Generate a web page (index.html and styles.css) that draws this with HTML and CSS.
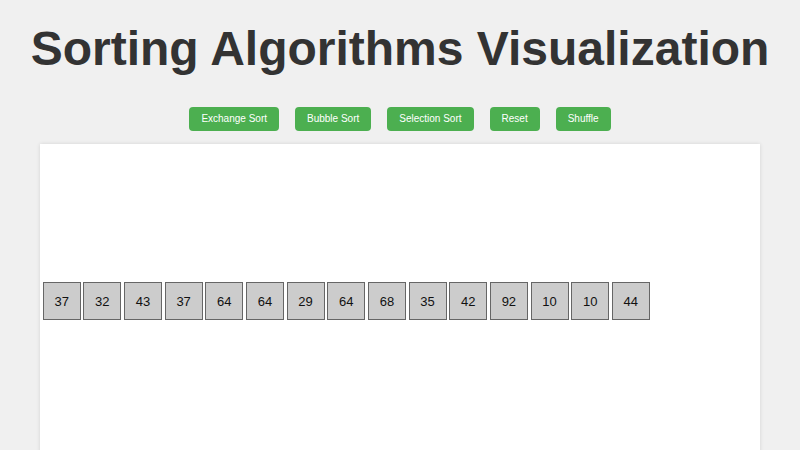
FILE: index.html
```html
<!DOCTYPE html>
<html lang="en">
<head>
<meta charset="UTF-8">
<title>Sorting Algorithms Visualization</title>
<link rel="stylesheet" href="styles.css">
</head>
<body>
<h1 class="title">Sorting Algorithms Visualization</h1>
<div class="controls">
  <button class="btn">Exchange Sort</button>
  <button class="btn">Bubble Sort</button>
  <button class="btn">Selection Sort</button>
  <button class="btn">Reset</button>
  <button class="btn">Shuffle</button>
</div>
<div class="stage">
  <div class="row">
    <div class="cell">37</div>
    <div class="cell">32</div>
    <div class="cell">43</div>
    <div class="cell">37</div>
    <div class="cell">64</div>
    <div class="cell">64</div>
    <div class="cell">29</div>
    <div class="cell">64</div>
    <div class="cell">68</div>
    <div class="cell">35</div>
    <div class="cell">42</div>
    <div class="cell">92</div>
    <div class="cell">10</div>
    <div class="cell">10</div>
    <div class="cell">44</div>
  </div>
</div>
</body>
</html>
```
FILE: styles.css
```css
html, body {
  margin: 0;
  padding: 0;
}
body {
  background: #f0f0f0;
  font-family: "Liberation Sans", Arial, sans-serif;
  color: #333;
  padding: 0 40px;
  overflow: hidden;
}
.title {
  margin: 21px -40px 0;
  font-size: 48px;
  line-height: 55px;
  font-weight: bold;
  text-align: center;
  white-space: nowrap;
  color: #333;
}
.controls {
  display: flex;
  justify-content: center;
  gap: 16px;
  margin-top: 31px;
}
.btn {
  font-family: "Liberation Sans", Arial, sans-serif;
  font-size: 10px;
  line-height: 12px;
  padding: 6px 12px;
  border: none;
  border-radius: 4px;
  background: #4caf50;
  color: #fff;
  cursor: pointer;
}
.stage {
  margin-top: 13px;
  background: #fff;
  height: 314px;
  box-shadow: 0 0 4px rgba(0, 0, 0, 0.12);
  display: flex;
  align-items: center;
  padding: 0 0 0 1.33px;
  margin-bottom: 40px;
}
.row {
  display: flex;
}
.cell {
  box-sizing: border-box;
  width: 38px;
  height: 38px;
  margin: 0 1.333px;
  background: #ccc;
  border: 1px solid #666;
  display: flex;
  align-items: center;
  justify-content: center;
  font-size: 13px;
  color: #111;
}
```
